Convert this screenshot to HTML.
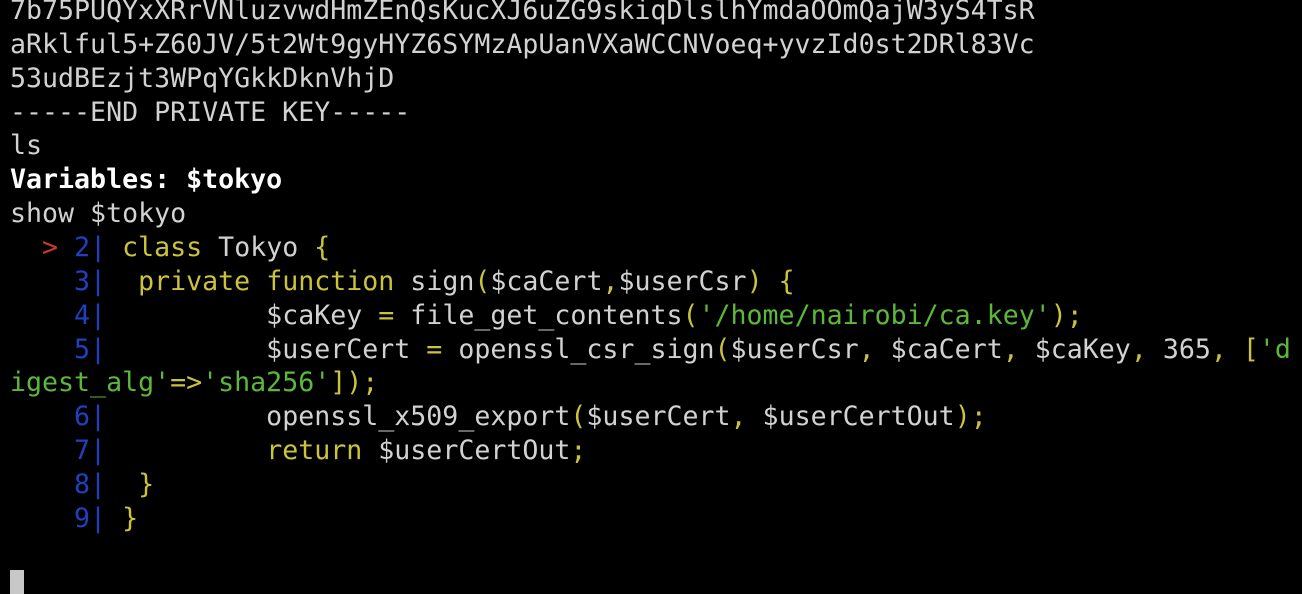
<!DOCTYPE html>
<html><head><meta charset="utf-8"><style>
html,body{margin:0;padding:0;background:#000;width:1302px;height:594px;overflow:hidden}
pre{position:absolute;left:10px;top:-6px;margin:0;font-family:"DejaVu Sans Mono","Liberation Mono",monospace;font-size:26.6px;line-height:33.86px;color:#d2d2d2;white-space:pre}
.y{color:#cbc33e}.g{color:#5cb83a}.b{color:#2040c0}.r{color:#c83a2a}.w{color:#fff;font-weight:bold}
.cur{position:absolute;left:10px;top:570px;width:14px;height:24px;background:#c8c8c8}
</style></head><body>
<pre>7b75PUQYxXRrVNluzvwdHmZEnQsKucXJ6uZG9skiqDlslhYmdaOOmQajW3yS4TsR
aRklful5+Z60JV/5t2Wt9gyHYZ6SYMzApUanVXaWCCNVoeq+yvzId0st2DRl83Vc
53udBEzjt3WPqYGkkDknVhjD
-----END PRIVATE KEY-----
ls
<span class="w">Variables: $tokyo</span>
show $tokyo
  <span class="r">&gt;</span> <span class="b">2|</span> <span class="y">class</span> Tokyo <span class="y">{</span>
    <span class="b">3|</span>  <span class="y">private function</span> sign<span class="y">(</span>$caCert<span class="y">,</span>$userCsr<span class="y">)</span> <span class="y">{</span>
    <span class="b">4|</span>          $caKey <span class="y">=</span> file_get_contents<span class="y">(</span><span class="g">'/home/nairobi/ca.key'</span><span class="y">);</span>
    <span class="b">5|</span>          $userCert <span class="y">=</span> openssl_csr_sign<span class="y">(</span>$userCsr<span class="y">,</span> $caCert<span class="y">,</span> $caKey<span class="y">,</span> 365<span class="y">,</span> <span class="y">[</span><span class="g">'d</span>
<span class="g">igest_alg'</span><span class="y">=&gt;</span><span class="g">'sha256'</span><span class="y">]);</span>
    <span class="b">6|</span>          openssl_x509_export<span class="y">(</span>$userCert<span class="y">,</span> $userCertOut<span class="y">);</span>
    <span class="b">7|</span>          <span class="y">return</span> $userCertOut<span class="y">;</span>
    <span class="b">8|</span>  <span class="y">}</span>
    <span class="b">9|</span> <span class="y">}</span>
</pre>
<div class="cur"></div>
</body></html>
